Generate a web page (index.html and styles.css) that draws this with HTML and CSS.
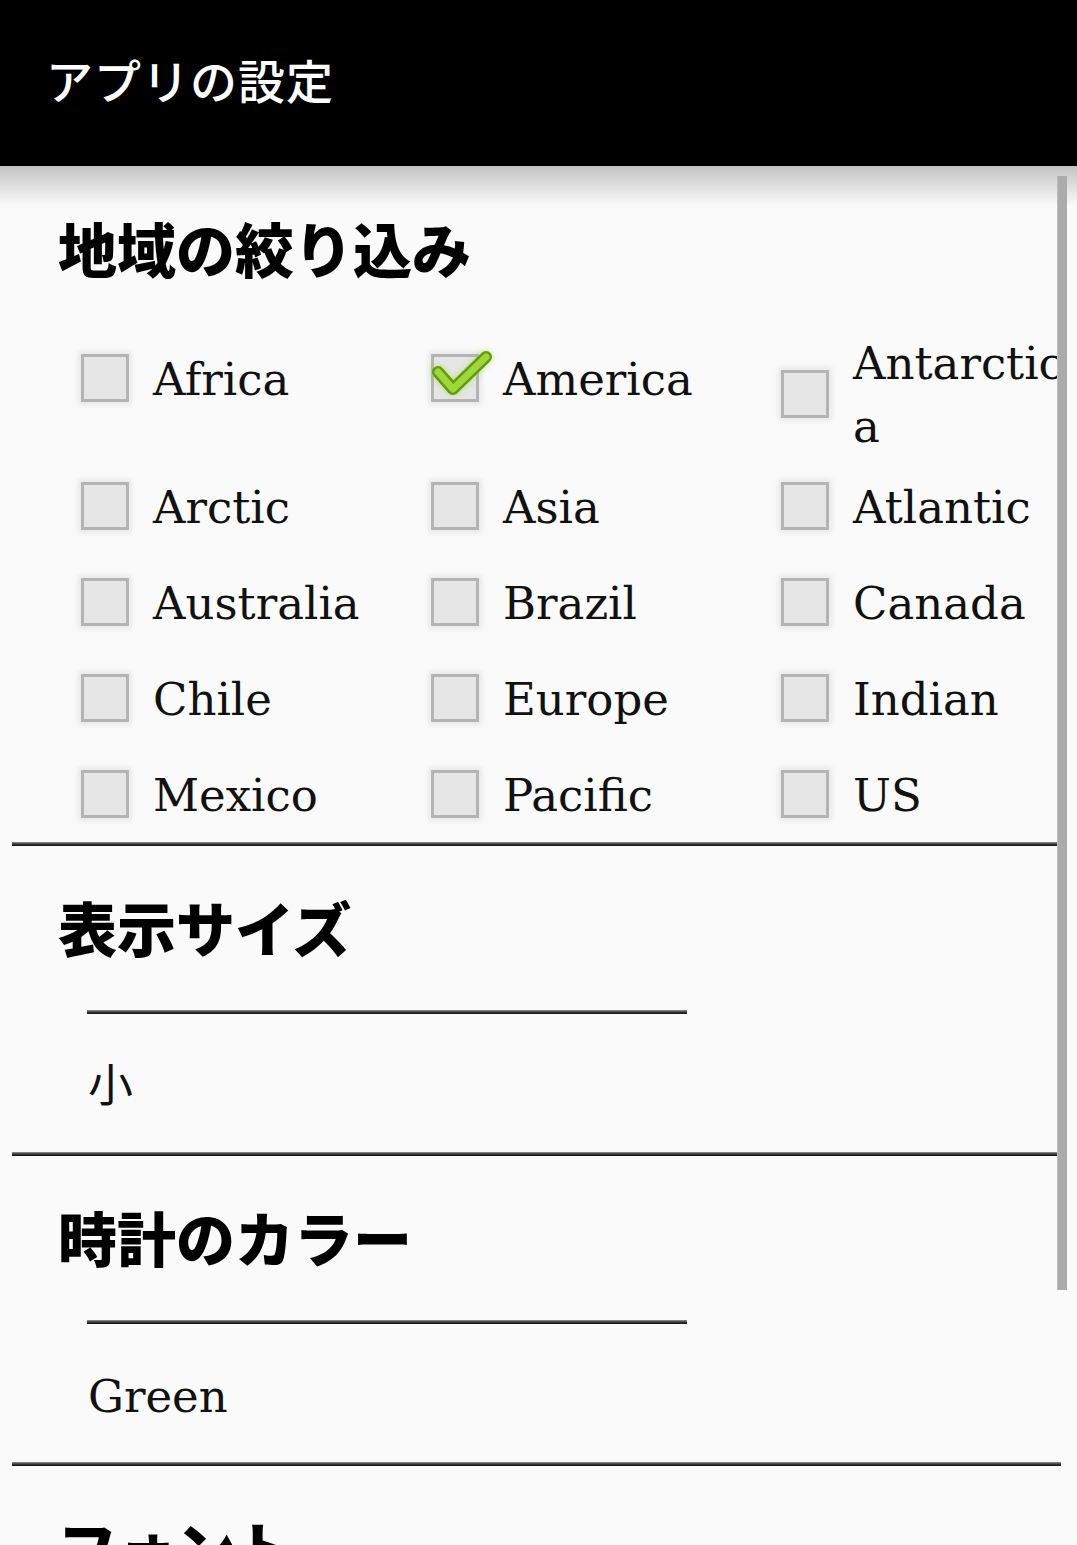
FILE: index.html
```html
<!DOCTYPE html>
<html lang="ja">
<head>
    <meta charset="UTF-8">
    <meta name="viewport" content="width=1077, initial-scale=1.0">
    <title>アプリの設定</title>
    <link rel="stylesheet" href="styles.css">
</head>
<body>
    <!-- Barra superior -->
    <header class="app-bar">
        <h1>アプリの設定</h1>
    </header>

    <main class="settings">
        <div class="scrollbar"></div>

        <!-- 地域の絞り込み -->
        <section class="pref-group">
            <h2 class="pref-title">地域の絞り込み</h2>
            <div class="region-grid">
                <label class="region"><span class="check"></span><span class="region-name">Africa</span></label>
                <label class="region"><span class="check checked">
                    <svg class="tick" width="64" height="44" viewBox="0 0 64 44">
                        <polyline points="7,18 22,35 55,3" fill="none" stroke="#5f9c10" stroke-width="12" stroke-linecap="round" stroke-linejoin="round"/>
                        <polyline points="7,18 22,35 55,3" fill="none" stroke="#9fd63c" stroke-width="7" stroke-linecap="round" stroke-linejoin="round"/>
                    </svg>
                </span><span class="region-name">America</span></label>
                <label class="region"><span class="check"></span><span class="region-name">Antarctica</span></label>
                <label class="region"><span class="check"></span><span class="region-name">Arctic</span></label>
                <label class="region"><span class="check"></span><span class="region-name">Asia</span></label>
                <label class="region"><span class="check"></span><span class="region-name">Atlantic</span></label>
                <label class="region"><span class="check"></span><span class="region-name">Australia</span></label>
                <label class="region"><span class="check"></span><span class="region-name">Brazil</span></label>
                <label class="region"><span class="check"></span><span class="region-name">Canada</span></label>
                <label class="region"><span class="check"></span><span class="region-name">Chile</span></label>
                <label class="region"><span class="check"></span><span class="region-name">Europe</span></label>
                <label class="region"><span class="check"></span><span class="region-name">Indian</span></label>
                <label class="region"><span class="check"></span><span class="region-name">Mexico</span></label>
                <label class="region"><span class="check"></span><span class="region-name">Pacific</span></label>
                <label class="region"><span class="check"></span><span class="region-name">US</span></label>
            </div>
        </section>
        <div class="divider"></div>

        <!-- 表示サイズ -->
        <section class="pref-group">
            <h2 class="pref-title">表示サイズ</h2>
            <div class="spinner">
                <div class="spinner-line"></div>
                <div class="spinner-value">小</div>
            </div>
        </section>
        <div class="divider"></div>

        <!-- 時計のカラー -->
        <section class="pref-group">
            <h2 class="pref-title">時計のカラー</h2>
            <div class="spinner">
                <div class="spinner-line"></div>
                <div class="spinner-value">Green</div>
            </div>
        </section>
        <div class="divider"></div>

        <!-- フォント -->
        <section class="pref-group">
            <h2 class="pref-title">フォント</h2>
            <div class="spinner">
                <div class="spinner-line"></div>
                <div class="spinner-value">Serif</div>
            </div>
        </section>
    </main>
</body>
</html>
```

FILE: styles.css
```css
body {
    margin: 0;
    padding: 0;
    width: 1077px;
    height: 1545px;
    overflow: hidden;
    background-color: #fafafa;
    color: #111;
    font-family: "DejaVu Serif", "Noto Sans CJK JP", serif;
}

/* Barra superior */
.app-bar {
    position: relative;
    z-index: 1;
    height: 166px;
    background-color: #000;
    display: flex;
    align-items: center;
    padding: 0 0 10px 46px;
    box-sizing: border-box;
}

.app-bar::after {
    content: "";
    position: absolute;
    top: 100%;
    left: 0;
    right: 0;
    height: 40px;
    background: linear-gradient(rgba(0, 0, 0, 0.22), rgba(0, 0, 0, 0));
}

.app-bar h1 {
    margin: 0;
    color: #fff;
    font-family: "Noto Sans CJK JP", sans-serif;
    font-size: 47px;
    font-weight: 500;
    letter-spacing: 1px;
}

.settings {
    position: relative;
}

.scrollbar {
    position: absolute;
    top: 10px;
    left: 1057px;
    width: 10px;
    height: 1114px;
    background-color: #ababab;
    border-left: 1px solid #bdbdbd;
    box-sizing: border-box;
    z-index: 2;
}

/* Grupos */
.pref-group {
    padding-top: 41px;
}

.pref-group:first-of-type {
    padding-top: 42px;
}

.pref-title {
    margin: 0;
    padding-left: 58px;
    font-family: "Noto Sans CJK JP", sans-serif;
    font-size: 59px;
    font-weight: 900;
    line-height: 80px;
    color: #000;
}

.divider {
    height: 4px;
    margin: 0 16px 0 12px;
    background: linear-gradient(#9a9a9a, #3a3a3a 50%, #111);
}

/* Regiões */
.region-grid {
    margin-top: 42px;
    padding-left: 81px;
    display: grid;
    grid-template-columns: 350px 350px 1fr;
    align-items: start;
}

.region {
    min-height: 96px;
    display: flex;
    align-items: center;
    gap: 24px;
}

.check {
    position: relative;
    flex: 0 0 auto;
    width: 48px;
    height: 48px;
    box-sizing: border-box;
    background-color: #e6e6e6;
    border: 3px solid #b4b4b4;
    box-shadow: 0 0 5px 3px rgba(0, 0, 0, 0.07);
}

.tick {
    position: absolute;
    left: -3px;
    top: -3px;
    overflow: visible;
    filter: drop-shadow(0 0 3px rgba(160, 220, 60, 0.7));
}

.region-name {
    padding-top: 2px;
    font-size: 45px;
    line-height: 63px;
    word-break: break-all;
}

/* Spinner */
.spinner {
    margin-top: 43px;
    padding-left: 87px;
}

.spinner-line {
    width: 600px;
    height: 4px;
    background: linear-gradient(#9a9a9a, #3a3a3a 50%, #111);
}

.spinner-value {
    padding: 41px 0 33px 1px;
    font-size: 45px;
    line-height: 64px;
}
```
